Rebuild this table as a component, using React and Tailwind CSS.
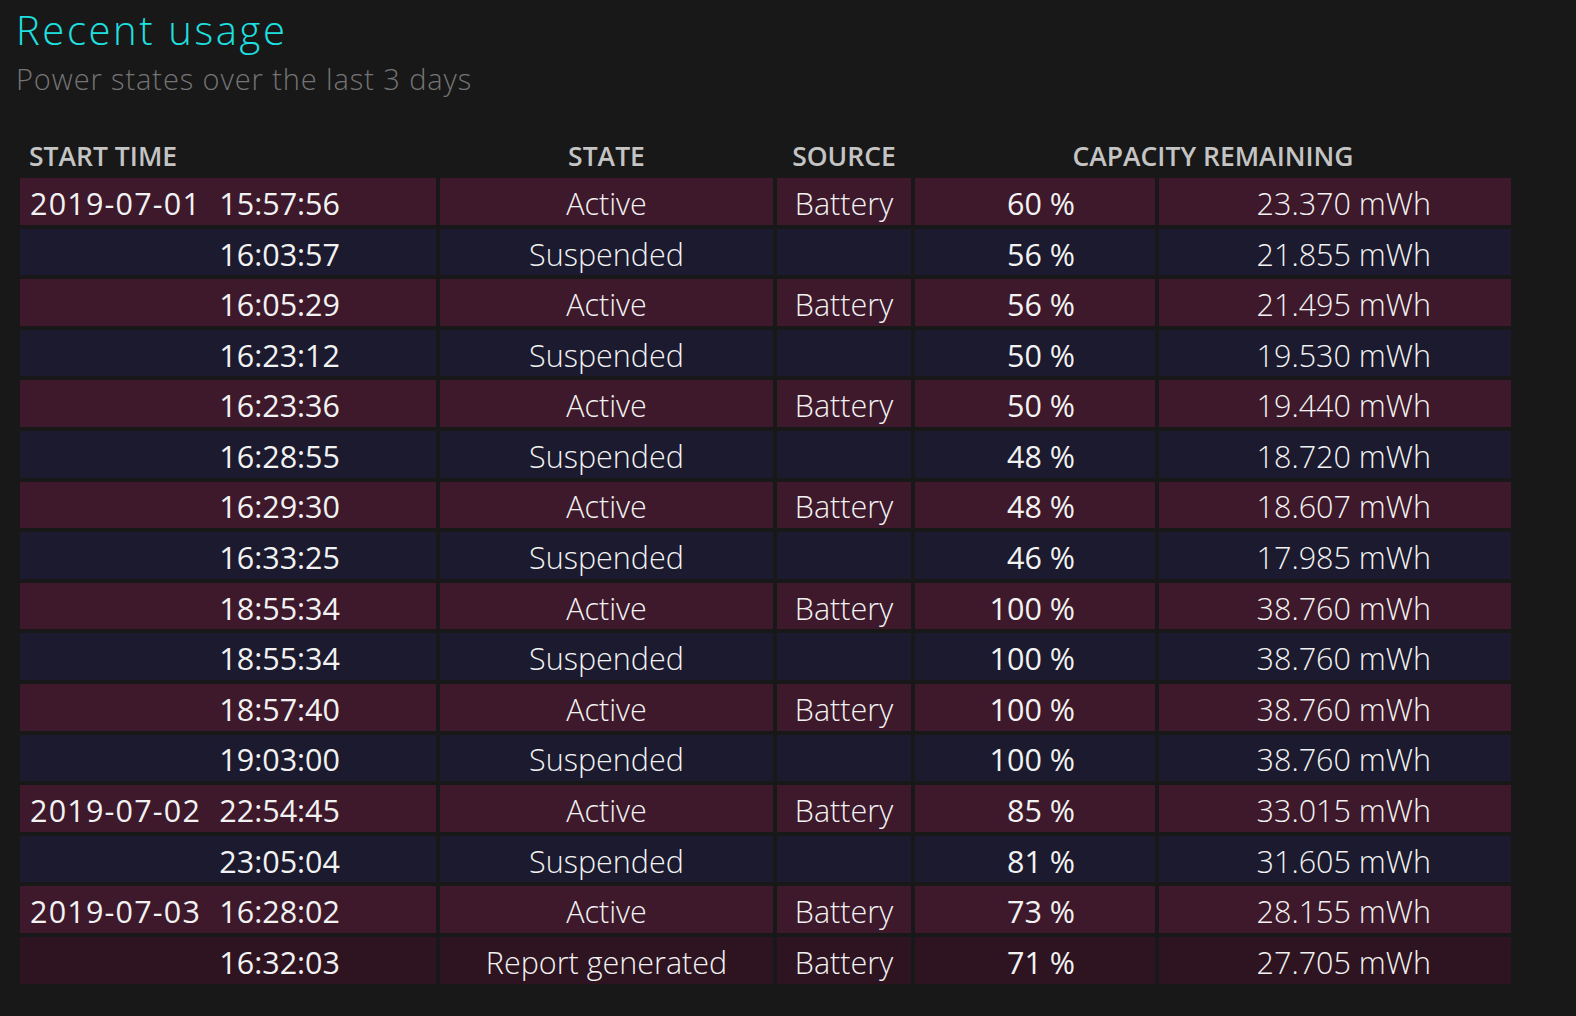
import React from 'react'

const rows = [
  { date: '2019-07-01', time: '15:57:56', state: 'Active', source: 'Battery', pct: '60 %', cap: '23.370 mWh' },
  { time: '16:03:57', state: 'Suspended', pct: '56 %', cap: '21.855 mWh' },
  { time: '16:05:29', state: 'Active', source: 'Battery', pct: '56 %', cap: '21.495 mWh' },
  { time: '16:23:12', state: 'Suspended', pct: '50 %', cap: '19.530 mWh' },
  { time: '16:23:36', state: 'Active', source: 'Battery', pct: '50 %', cap: '19.440 mWh' },
  { time: '16:28:55', state: 'Suspended', pct: '48 %', cap: '18.720 mWh' },
  { time: '16:29:30', state: 'Active', source: 'Battery', pct: '48 %', cap: '18.607 mWh' },
  { time: '16:33:25', state: 'Suspended', pct: '46 %', cap: '17.985 mWh' },
  { time: '18:55:34', state: 'Active', source: 'Battery', pct: '100 %', cap: '38.760 mWh' },
  { time: '18:55:34', state: 'Suspended', pct: '100 %', cap: '38.760 mWh' },
  { time: '18:57:40', state: 'Active', source: 'Battery', pct: '100 %', cap: '38.760 mWh' },
  { time: '19:03:00', state: 'Suspended', pct: '100 %', cap: '38.760 mWh' },
  { date: '2019-07-02', time: '22:54:45', state: 'Active', source: 'Battery', pct: '85 %', cap: '33.015 mWh' },
  { time: '23:05:04', state: 'Suspended', pct: '81 %', cap: '31.605 mWh' },
  { date: '2019-07-03', time: '16:28:02', state: 'Active', source: 'Battery', pct: '73 %', cap: '28.155 mWh' },
  { time: '16:32:03', state: 'Report generated', source: 'Battery', pct: '71 %', cap: '27.705 mWh' },
]

function rowBg(r) {
  if (r.state === 'Active') return 'bg-[#3d192b]'
  if (r.state === 'Suspended') return 'bg-[#1b1a2e]'
  return 'bg-[#2e1420]'
}

export default function App() {
  return (
    <div
      className="min-h-screen bg-[#181818] text-[#f2f2f2] pt-[6px]"
      style={{ fontFamily: '"Open Sans", "Noto Sans", sans-serif' }}
    >
      <div className="pl-[16px]">
        <h1 className="text-[40px] leading-[48px] font-light tracking-[2.6px] text-[#1fe0e0]">
          Recent usage
        </h1>
        <p className="mt-2 text-[29px] leading-[34px] font-light tracking-[0.9px] text-[#747474]">
          Power states over the last 3 days
        </p>
      </div>

      <div className="pl-5 mt-[45px]">
        <div className="grid grid-cols-[416px_333px_134px_240px_352px] gap-x-1 text-[26.5px] leading-[30px] font-semibold text-[#c4c4c4]">
          <div className="pl-[9px]">START TIME</div>
          <div className="text-center">STATE</div>
          <div className="text-center">SOURCE</div>
          <div className="col-span-2 text-center">CAPACITY REMAINING</div>
        </div>

        <div className="mt-[7px] grid grid-cols-[416px_333px_134px_240px_352px] auto-rows-[46.6px] gap-1 text-[30.5px]">
          {rows.map((r, i) => {
            const bg = rowBg(r)
            return (
              <React.Fragment key={i}>
                <div className={`${bg} flex items-center justify-between pt-[5px] pl-[10px] pr-[96px]`}>
                  <span className="tracking-[1.2px]">{r.date || ''}</span>
                  <span>{r.time}</span>
                </div>
                <div className={`${bg} flex items-center justify-center pt-[5px] font-light`}>{r.state}</div>
                <div className={`${bg} flex items-center justify-center pt-[5px] font-light`}>{r.source || ''}</div>
                <div className={`${bg} flex items-center justify-end pt-[5px] pr-[80px]`}>{r.pct}</div>
                <div className={`${bg} flex items-center justify-end pt-[5px] pr-[80px] font-light`}>{r.cap}</div>
              </React.Fragment>
            )
          })}
        </div>
      </div>
    </div>
  )
}
